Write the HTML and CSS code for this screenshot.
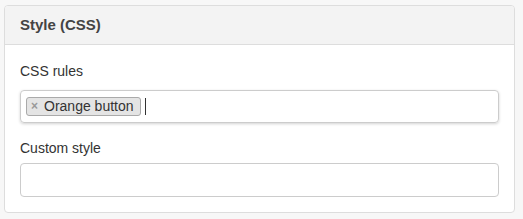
FILE: index.html
```html
<!DOCTYPE html>
<html lang="en">
<head>
  <meta charset="UTF-8">
  <title>Style (CSS)</title>
  <link rel="stylesheet" href="styles.css">
</head>
<body>

  <div class="panel">
    <div class="panel-heading">Style (CSS)</div>
    <div class="panel-body">
      <div class="form-group">
        <label>CSS rules</label>
        <div class="tag-input">
          <span class="tag"><span class="tag-remove">&times;</span>Orange button</span>
          <span class="caret"></span>
        </div>
      </div>
      <div class="form-group last">
        <label class="second">Custom style</label>
        <input type="text" class="form-control">
      </div>
    </div>
  </div>

</body>
</html>
```

FILE: styles.css
```css
* {
  margin: 0;
  padding: 0;
  box-sizing: border-box;
}

body {
  background-color: #f7f7f7;
  color: #333;
  font-family: 'Liberation Sans', Arial, sans-serif;
  font-size: 14px;
  line-height: 20px;
  padding: 5px 8px 0 4px;
}

.panel {
  width: 511px;
  background-color: #fff;
  border: 1px solid #ddd;
  border-radius: 4px;
}

.panel-heading {
  height: 39px;
  padding: 9px 15px 10px;
  background-color: #f3f3f3;
  border-bottom: 1px solid #ddd;
  border-radius: 3px 3px 0 0;
  font-weight: bold;
  font-size: 15px;
  color: #444;
}

.panel-body {
  padding: 16px 15px 15px;
}

label {
  display: block;
  margin-bottom: 9px;
}

label.second {
  margin-bottom: 5px;
}

.form-group {
  margin-bottom: 15px;
}

.form-group.last {
  margin-bottom: 0;
}

.tag-input {
  display: flex;
  align-items: center;
  height: 33px;
  width: 479px;
  padding: 0 5px;
  border: 1px solid #ccc;
  border-radius: 4px;
  box-shadow: 0 1px 3px rgba(0, 0, 0, 0.18);
}

.tag {
  display: inline-flex;
  align-items: center;
  height: 19px;
  padding: 0 6px 0 4px;
  background-color: #e4e4e4;
  border: 1px solid #aaa;
  border-radius: 3px;
  color: #333;
  line-height: 17px;
}

.tag-remove {
  color: #999;
  font-weight: bold;
  font-size: 12px;
  margin-right: 6px;
}

.caret {
  display: inline-block;
  width: 1px;
  height: 17px;
  margin-left: 4px;
  background-color: #333;
}

.form-control {
  display: block;
  width: 479px;
  height: 34px;
  border: 1px solid #ccc;
  border-radius: 4px;
  background-color: #fff;
  font: inherit;
}
```
